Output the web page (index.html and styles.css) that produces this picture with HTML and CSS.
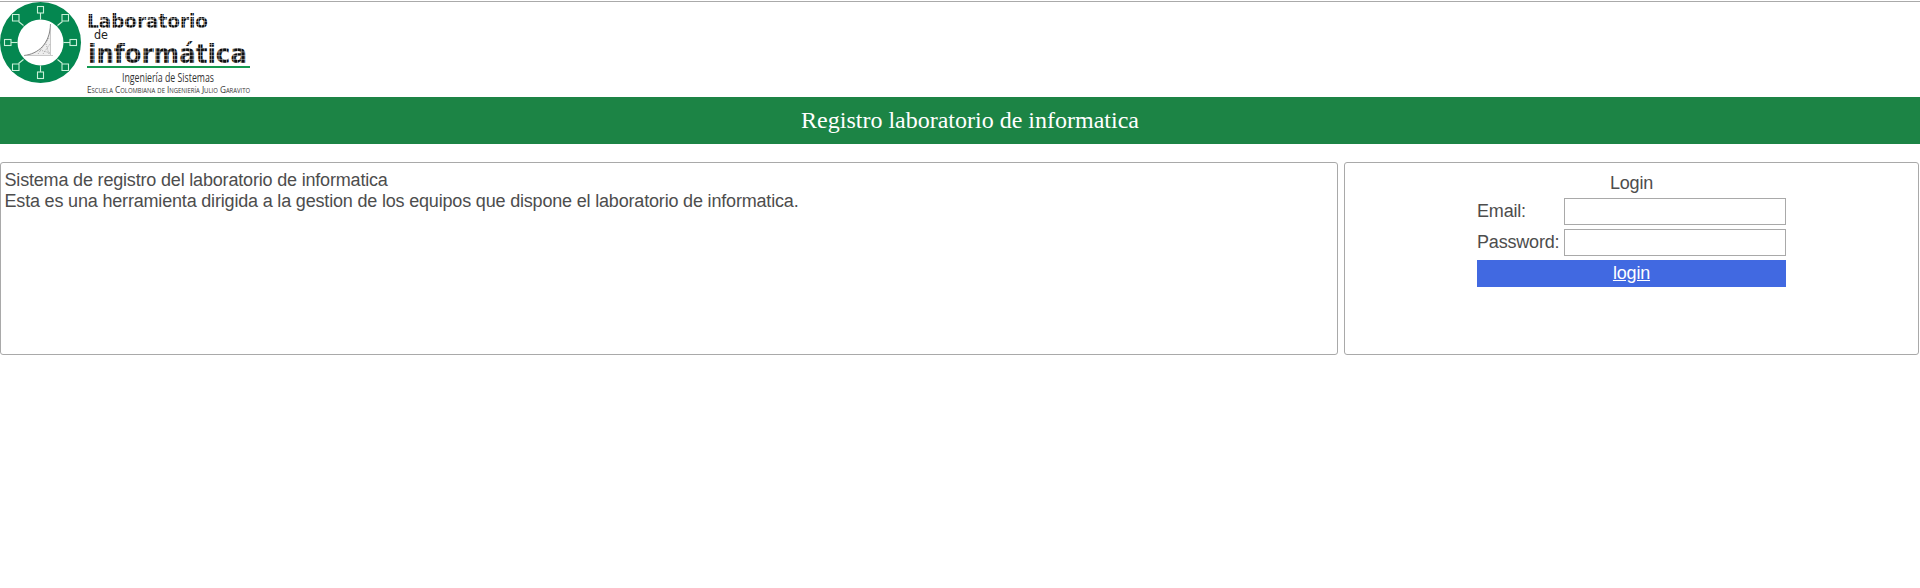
FILE: index.html
```html
<!DOCTYPE html>
<html lang="es">
<head>
<meta charset="utf-8">
<title>Registro laboratorio de informatica</title>
<link rel="stylesheet" href="styles.css">
</head>
<body>
<header class="top">
  <svg class="logo" width="252" height="95" viewBox="0 2 252 95">
    <defs>
      <pattern id="grid-s" width="3" height="3" patternUnits="userSpaceOnUse" x="88" y="13">
        <path d="M0 2.6H3M2.6 0V3" stroke="#fff" stroke-width=".7" stroke-opacity=".6"/>
      </pattern>
      <pattern id="grid-l" width="3.7" height="3.7" patternUnits="userSpaceOnUse" x="90" y="45">
        <path d="M0 3.3H3.7M3.3 0V3.7" stroke="#fff" stroke-width=".7" stroke-opacity=".65"/>
      </pattern>
      <g id="node" fill="none" stroke="#c9f0d8" stroke-width="1.1">
        <path d="M0 -23V-29.5"/><rect x="-3" y="-36" width="6" height="6.5"/>
      </g>
    </defs>
    <circle cx="40.5" cy="42.5" r="40.5" fill="#048750"/>
    <circle cx="40.5" cy="42.5" r="23" fill="#fff"/>
    <g transform="translate(40.5 42.5)">
      <use href="#node"/><use href="#node" transform="rotate(90)"/><use href="#node" transform="rotate(180)"/><use href="#node" transform="rotate(270)"/>
      <g fill="none" stroke="#c9f0d8" stroke-width="1.1">
        <path d="M17 -17L22 -21M-17 -17L-22 -21M17 17L22 21M-17 17L-22 21"/>
        <path d="M21.5 -28h6.5v6.5h-6.5zM-28 -28h6.5v6.5h-6.5zM21.5 21.5h6.5v6.5h-6.5zM-28 21.5h6.5v6.5h-6.5z"/>
      </g>
    </g>
    <path d="M25 55.5C38 53 49 44 50.500 25V55.500Z" fill="#eee"/>
    <path d="M24 55.500C38 54 50 44 50.500 24" fill="none" stroke="#777" stroke-width=".9"/>
    <path d="M24 55.500H53M50.500 24V55" fill="none" stroke="#aaa" stroke-width=".6"/>
    <path d="M38 54L49 38M43 54L50 44M40 50L50 53M46 44L49 54" stroke="#888" stroke-width=".7" stroke-dasharray="1 1.300"/>
    <text class="word small" x="87" y="27.500" textLength="121" lengthAdjust="spacingAndGlyphs">Laboratorio</text>
    <rect x="87" y="12" width="122" height="17" fill="url(#grid-s)"/>
    <text class="de" x="94" y="39" textLength="14" lengthAdjust="spacingAndGlyphs">de</text>
    <text class="word large" x="88" y="63" textLength="159" lengthAdjust="spacingAndGlyphs">informática</text>
    <rect x="89" y="40" width="159" height="24" fill="url(#grid-l)"/>
    <rect x="87" y="66" width="163" height="2" fill="#159a50"/>
    <text class="sub" x="122" y="81.500" textLength="92" lengthAdjust="spacingAndGlyphs">Ingeniería de Sistemas</text>
    <text class="sub caps" x="87" y="92.500" textLength="163" lengthAdjust="spacingAndGlyphs">Escuela Colombiana de Ingeniería Julio Garavito</text>
  </svg>
</header>
<div class="band">Registro laboratorio de informatica</div>
<main class="panels">
  <section class="panel intro">Sistema de registro del laboratorio de informatica<br>Esta es una herramienta dirigida a la gestion de los equipos que dispone el laboratorio de informatica.</section>
  <section class="panel access">
    <form class="form">
      <div class="heading">Login</div>
      <label for="email">Email:</label><input id="email" type="text">
      <label for="password">Password:</label><input id="password" type="password">
      <a class="submit" href="#">login</a>
    </form>
  </section>
</main>
</body>
</html>
```

FILE: styles.css
```css
* { box-sizing: border-box; }
body { margin: 0; padding-top: 1px; background: #fff; color: #4d4d4d; font: 18px/21px "Liberation Sans", Arial, sans-serif; letter-spacing: -0.18px; }
.top { height: 96px; border-top: 1px solid #aaa; letter-spacing: 0; }
.logo { display: block; overflow: visible; }
.word { font-family: "DejaVu Sans", sans-serif; font-weight: bold; fill: #111; }
.small { font-size: 19px; }
.large { font-size: 26px; }
.de { font: 12px "DejaVu Sans", sans-serif; fill: #222; }
.sub { font-family: "Open Sans", sans-serif; font-size: 12px; fill: #333; }
.caps { font-size: 9.8px; font-variant: small-caps; }
.band { height: 47px; padding-left: 20px; background: #1c8445; color: #fff; text-align: center; font: 24px/47px "Liberation Serif", "Times New Roman", serif; letter-spacing: 0; }
.panels { display: flex; gap: 6px; margin-top: 18px; padding-right: 1px; }
.panel { height: 193px; border: 1px solid #a9a9a9; border-radius: 3px; }
.intro { width: 1338px; padding: 7px 3.5px; }
.access { flex: 1; padding-top: 10px; }
.form { display: grid; grid-template-columns: 83px 222px; column-gap: 4px; row-gap: 4px; margin-left: 132px; grid-template-rows: 21px 27px 27px 27px; line-height: 27px; }
.heading { grid-column: 1 / 3; text-align: center; line-height: 20px; }
input { width: 222px; height: 27px; margin: 0; border: 1px solid #a9a9a9; background: #fff; }
.submit { grid-column: 1 / 3; background: #4169e1; color: #fff; text-align: center; }
```
